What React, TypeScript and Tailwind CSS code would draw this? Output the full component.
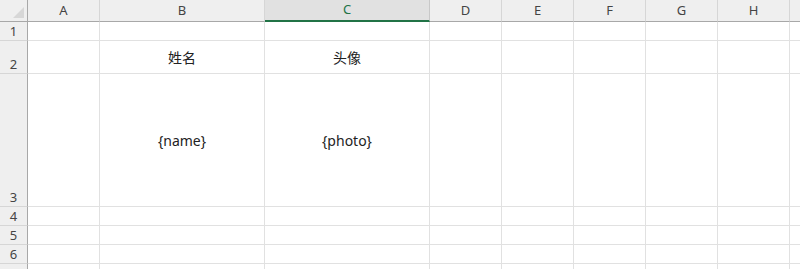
import React from "react";

const cols = ["A", "B", "C", "D", "E", "F", "G", "H", ""];
const rowHeights = ["h-[19px]", "h-[33px]", "h-[133px]", "h-[19px]", "h-[19px]", "h-[19px]", "h-[19px]"];

const cellText: Record<string, string> = {
  "2-B": "姓名",
  "2-C": "头像",
  "3-B": "{name}",
  "3-C": "{photo}",
};

export default function App() {
  return (
    <div
      className="w-[800px] h-[269px] overflow-hidden bg-white text-[#222]"
      style={{ fontFamily: '"Noto Sans", "Noto Sans CJK SC", sans-serif' }}
    >
      <div className="grid grid-cols-[28px_72px_165px_165px_72px_72px_72px_72px_72px_1fr] w-[820px]">
        {/* header row */}
        <div className="h-[22px] bg-[#efefef] border-r border-b border-r-[#a8a8a8] border-b-[#a8a8a8] relative">
          <div className="absolute right-[3px] bottom-[3px] w-0 h-0 border-l-[11px] border-l-transparent border-b-[11px] border-b-[#d7d7d7]" />
        </div>
        {cols.map((c) =>
          c === "C" ? (
            <div
              key={c}
              className="h-[22px] bg-[#e1e1e1] border-r border-r-[#c8c8c8] border-b-2 border-b-[#217346] flex items-center justify-center text-[13px] text-[#217346] pb-[1px]"
            >
              {c}
            </div>
          ) : (
            <div
              key={c || "I"}
              className="h-[22px] bg-[#efefef] border-r border-r-[#d6d6d6] border-b border-b-[#a8a8a8] flex items-center justify-center text-[13px] text-[#444]"
            >
              {c}
            </div>
          )
        )}

        {/* body rows */}
        {rowHeights.map((h, i) => {
          const r = i + 1;
          return (
            <React.Fragment key={r}>
              <div
                className={`${h} bg-[#efefef] border-r border-r-[#a8a8a8] border-b border-b-[#d6d6d6] flex items-end justify-center text-[13px] leading-[16px] text-[#444] pb-[1px]`}
              >
                {r <= 6 ? r : ""}
              </div>
              {cols.map((c) => (
                <div
                  key={c || "I"}
                  className={`${h} border-r border-b border-[#e1e1e1] flex items-center justify-center text-[14px] text-[#222]`}
                >
                  {cellText[`${r}-${c}`] ?? ""}
                </div>
              ))}
            </React.Fragment>
          );
        })}
      </div>
    </div>
  );
}
